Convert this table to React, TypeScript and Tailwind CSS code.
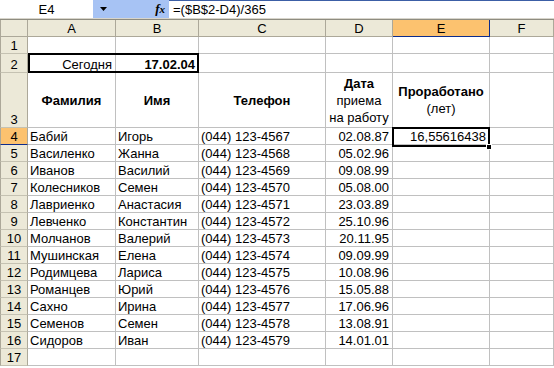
import React from "react";

const data: [string, string, string, string][] = [
  ["Бабий", "Игорь", "(044) 123-4567", "02.08.87"],
  ["Василенко", "Жанна", "(044) 123-4568", "05.02.96"],
  ["Иванов", "Василий", "(044) 123-4569", "09.08.99"],
  ["Колесников", "Семен", "(044) 123-4570", "05.08.00"],
  ["Лавриенко", "Анастасия", "(044) 123-4571", "23.03.89"],
  ["Левченко", "Константин", "(044) 123-4572", "25.10.96"],
  ["Молчанов", "Валерий", "(044) 123-4573", "20.11.95"],
  ["Мушинская", "Елена", "(044) 123-4574", "09.09.99"],
  ["Родимцева", "Лариса", "(044) 123-4575", "10.08.96"],
  ["Романцев", "Юрий", "(044) 123-4576", "15.05.88"],
  ["Сахно", "Ирина", "(044) 123-4577", "17.06.96"],
  ["Семенов", "Семен", "(044) 123-4578", "13.08.91"],
  ["Сидоров", "Иван", "(044) 123-4579", "14.01.01"],
];

const base = "border-r border-b border-[#c0c0c0] flex whitespace-nowrap overflow-hidden leading-[15px]";
const cell = base + " items-end pl-[2px]";
const cellR = base + " items-end justify-end pr-[3px]";
const cellC = base + " items-center justify-center font-bold";
const rowHdr =
  "bg-[#ece9d8] border-l border-r border-b border-l-[#aca899] border-r-[#aca899] border-b-[#c5c2b2] flex items-end justify-center leading-[15px]";
const colHdr =
  "bg-[#ece9d8] border-r border-b border-[#aca899] flex items-center justify-center leading-[15px]";

function EmptyRow({ n }: { n: number }) {
  return (
    <>
      <div className={rowHdr}>{n}</div>
      <div className={cell} />
      <div className={cell} />
      <div className={cell} />
      <div className={cell} />
      <div className={cell} />
      <div className={cell} />
    </>
  );
}

export default function App() {
  return (
    <div className="w-[554px] h-[368px] overflow-hidden bg-white text-[13px] text-black font-['Liberation_Sans',Arial,sans-serif]">
      {/* formula bar */}
      <div className="flex h-[18px]">
        <div className="w-[93px] bg-white flex items-center justify-center leading-[15px]">E4</div>
        <div className="w-[76px] bg-[#a7c3f4] flex items-center">
          <svg width="8" height="5" viewBox="0 0 8 5" className="ml-[7px]">
            <polygon points="0,0 7,0 3.5,4" fill="#000" />
          </svg>
          <span className="ml-auto mr-[4px] italic font-bold font-['Liberation_Serif',serif] text-[13px] leading-[15px]">
            f<span className="text-[11px]">x</span>
          </span>
        </div>
        <div className="flex-1 bg-white border-t border-[#3c5fa6] flex items-center pl-[4px] leading-[15px]">
          =($B$2-D4)/365
        </div>
      </div>
      <div className="h-[1px] bg-[#d8d5cb]" />
      <div className="h-[1px] bg-[#8e8c80]" />
      {/* grid */}
      <div className="relative grid grid-cols-[28px_88px_83px_127px_67px_97px_1fr] grid-rows-[17px_17px_19px_55px] auto-rows-[17px]">
        <div className="bg-[#ece9d8] border-l border-r border-b border-[#aca899]" />
        <div className={colHdr}>A</div>
        <div className={colHdr}>B</div>
        <div className={colHdr}>C</div>
        <div className={colHdr}>D</div>
        <div className="bg-[#fcc26f] border-r border-b border-[#0d2c8c] flex items-center justify-center leading-[15px]">E</div>
        <div className={colHdr}>F</div>

        <EmptyRow n={1} />

        {/* row 2 */}
        <div className={rowHdr}>2</div>
        <div className={cellR}>Сегодня</div>
        <div className={cellR + " font-bold"}>17.02.04</div>
        <div className={cell} />
        <div className={cell} />
        <div className={cell} />
        <div className={cell} />

        {/* row 3 */}
        <div className={rowHdr}>3</div>
        <div className={cellC}>Фамилия</div>
        <div className={cellC}>Имя</div>
        <div className={cellC}>Телефон</div>
        <div className="border-r border-b border-[#c0c0c0] flex flex-col items-center justify-center leading-[17px]">
          <span className="font-bold">Дата</span>
          <span>приема</span>
          <span>на работу</span>
        </div>
        <div className="border-r border-b border-[#c0c0c0] flex flex-col items-center justify-center leading-[17px]">
          <span className="font-bold">Проработано</span>
          <span>(лет)</span>
        </div>
        <div className={cell} />

        {data.map((r, i) => (
          <React.Fragment key={i}>
            <div
              className={
                i === 0
                  ? "bg-[#fcc26f] border-l border-r border-b border-l-[#aca899] border-r-[#aca899] border-b-[#0d2c8c] flex items-end justify-center leading-[15px]"
                  : rowHdr
              }
            >
              {i + 4}
            </div>
            <div className={cell}>{r[0]}</div>
            <div className={cell}>{r[1]}</div>
            <div className={cell}>{r[2]}</div>
            <div className={cellR}>{r[3]}</div>
            <div className={cellR}>{i === 0 ? "16,55616438" : ""}</div>
            <div className={cell} />
          </React.Fragment>
        ))}

        <EmptyRow n={17} />

        {/* A2:B2 thick border */}
        <div className="absolute left-[28px] top-[33px] w-[171px] h-[20px] border-2 border-black pointer-events-none" />
        {/* E4 selection */}
        <div className="absolute left-[392px] top-[107px] w-[98px] h-[20px] border-2 border-black pointer-events-none" />
        <div className="absolute left-[486px] top-[124px] w-[6px] h-[6px] bg-black border border-white pointer-events-none" />
      </div>
    </div>
  );
}
